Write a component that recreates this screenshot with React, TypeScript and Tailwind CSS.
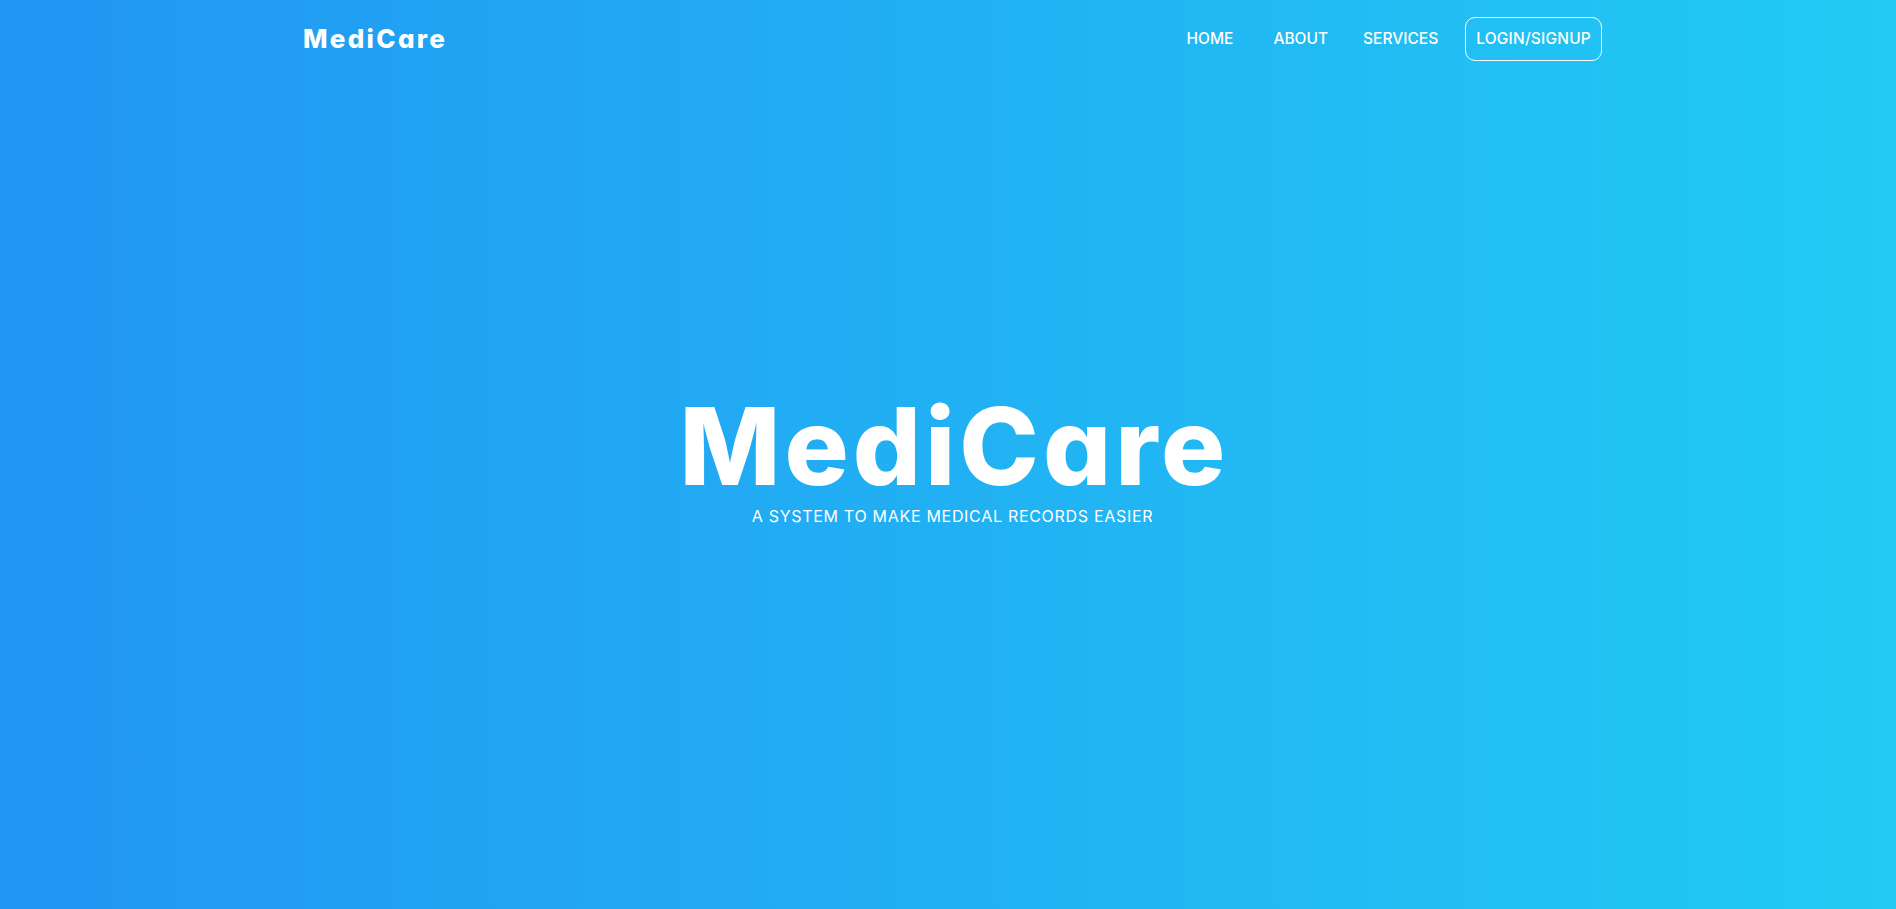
import React from "react";

export default function App() {
  return (
    <div className="min-h-screen w-full pl-[9px] flex flex-col text-white bg-[linear-gradient(90deg,#2196f3_0%,#21cbf3_100%)] font-['Inter','Noto_Sans',sans-serif] [font-feature-settings:'cv11']">
      <header className="mx-auto w-[1299px] h-[78px] flex items-center justify-between">
        <div className="text-[26px] font-extrabold tracking-[2.3px] leading-none">MediCare</div>
        <nav className="flex items-center text-[15.5px] font-medium leading-none">
          <a className="cursor-pointer">HOME</a>
          <a className="ml-[40px] cursor-pointer">ABOUT</a>
          <a className="ml-[35px] cursor-pointer">SERVICES</a>
          <button className="ml-[27px] h-[44px] px-[10px] border border-white rounded-[10px] font-medium tracking-[0.2px]">
            LOGIN/SIGNUP
          </button>
        </nav>
      </header>
      <main className="flex-1 flex flex-col items-center pt-[315px]">
        <h1 className="text-[107px] font-extrabold leading-none tracking-[4px] pl-[4px]">MediCare</h1>
        <p className="mt-[4px] text-[16px] leading-[24px] font-normal tracking-[0.7px]">A SYSTEM TO MAKE MEDICAL RECORDS EASIER</p>
      </main>
    </div>
  );
}
